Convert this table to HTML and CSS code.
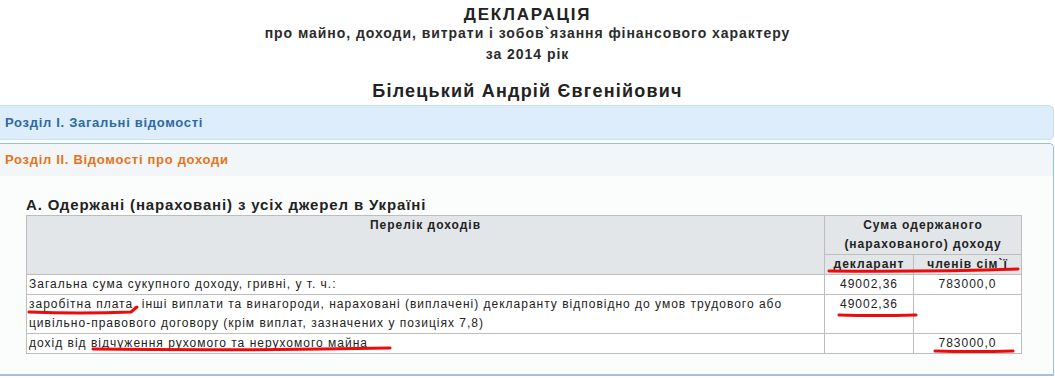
FILE: index.html
```html
<!DOCTYPE html>
<html lang="uk">
<head>
<meta charset="utf-8">
<title>Декларація</title>
<link rel="stylesheet" href="styles.css">
</head>
<body>
<div class="page">
  <header class="doc-head">
    <h1 class="doc-title">ДЕКЛАРАЦІЯ</h1>
    <p class="doc-sub">про майно, доходи, витрати і зобов`язання фінансового характеру<br>за 2014 рік</p>
    <h2 class="doc-name">Білецький Андрій Євгенійович</h2>
  </header>

  <div class="panels">
    <section class="panel panel-closed">
      <div class="panel-head">Розділ І. Загальні відомості</div>
    </section>
    <section class="panel panel-open">
      <div class="panel-head">Розділ ІІ. Відомості про доходи</div>
      <div class="panel-body">
        <h3 class="tbl-title">А. Одержані (нараховані) з усіх джерел в Україні</h3>
        <table class="income">
          <colgroup>
            <col class="c1"><col class="c2"><col class="c3">
          </colgroup>
          <thead>
            <tr>
              <th rowspan="2">Перелік доходів</th>
              <th colspan="2">Сума одержаного (нарахованого) доходу</th>
            </tr>
            <tr>
              <th class="sub">декларант</th>
              <th class="sub">членів сім`ї</th>
            </tr>
          </thead>
          <tbody>
            <tr>
              <td>Загальна сума сукупного доходу, гривні, у т. ч.:</td>
              <td class="num">49002,36</td>
              <td class="num">783000,0</td>
            </tr>
            <tr>
              <td>заробітна плата, інші виплати та винагороди, нараховані (виплачені) декларанту відповідно до умов трудового або цивільно-правового договору (крім виплат, зазначених у позиціях 7,8)</td>
              <td class="num">49002,36</td>
              <td class="num"></td>
            </tr>
            <tr>
              <td>дохід від відчуження рухомого та нерухомого майна</td>
              <td class="num"></td>
              <td class="num">783000,0</td>
            </tr>
          </tbody>
        </table>
      </div>
    </section>
  </div>

  <svg class="marks" width="1055" height="378" viewBox="0 0 1055 378" aria-hidden="true">
    <path d="M829 271 Q 930 272 1018 269"/>
    <path d="M839 315 Q 875 316 916 315"/>
    <path d="M935 351 Q 975 352 1013 351"/>
    <path d="M29 312 Q 80 314 131 312 L 137 307"/>
    <path d="M93 349 Q 240 351 390 348"/>
  </svg>
</div>
</body>
</html>
```

FILE: styles.css
```css
html, body {
  margin: 0;
  padding: 0;
  background: #ffffff;
}

body {
  font-family: "Liberation Sans", Arial, sans-serif;
  color: #2b2b2b;
  overflow: hidden;
}

.page {
  position: relative;
  width: 1055px;
  height: 378px;
  overflow: hidden;
}

.doc-head {
  text-align: center;
  padding-top: 7px;
}

.doc-title {
  margin: 0;
  font-size: 17px;
  line-height: 16px;
  font-weight: bold;
  letter-spacing: 1.8px;
  color: #222;
}

.doc-sub {
  margin: 0;
  font-size: 14px;
  line-height: 21px;
  font-weight: bold;
  letter-spacing: 0.95px;
  color: #2b2b2b;
}

.doc-name {
  margin: 15px 0 0;
  font-size: 18px;
  line-height: 22px;
  font-weight: bold;
  letter-spacing: 1.2px;
  color: #222;
}

.panels {
  margin: 3px 1px 0 -6px;
  display: flex;
  flex-direction: column;
  gap: 3px;
}

.panel {
  border-radius: 5px;
}

.panel-head {
  font-size: 13px;
  font-weight: bold;
  padding-left: 10px;
  letter-spacing: 0.7px;
}

.panel-closed {
  background: #ddedfb;
  border: 1px solid #c8dff4;
}

.panel-closed .panel-head {
  height: 33px;
  line-height: 33px;
  color: #2c6aa2;
}

.panel-open {
  border: 1px solid #92c1ea;
  border-bottom: 2px solid #a8bfdc;
  border-radius: 5px 5px 0 0;
  background: #fbfdfd;
}

.panel-open .panel-head {
  height: 32px;
  line-height: 32px;
  background: #f2f6f8;
  color: #e5741a;
  border-radius: 5px 5px 0 0;
}

.panel-body {
  padding: 20px 0 20px 31px;
}

.tbl-title {
  margin: 0 0 1px;
  font-size: 15px;
  line-height: 18px;
  font-weight: bold;
  color: #222;
  letter-spacing: 0.85px;
}

.income {
  border-collapse: collapse;
  table-layout: fixed;
  width: 995px;
  font-size: 12px;
  line-height: 19px;
  letter-spacing: 1px;
  color: #222;
}

.c1 { width: 798px; }
.c2 { width: 89px; }
.c3 { width: 108px; }

.income th,
.income td {
  border: 1px solid #bdbdbd;
  padding: 0 2px;
}

.income thead th {
  background: #e2e6e9;
  font-weight: bold;
  text-align: center;
  vertical-align: top;
  padding: 0 4px;
}

.income td {
  vertical-align: top;
  background: #ffffff;
  text-align: left;
}

.income td.num {
  text-align: center;
}

.marks {
  position: absolute;
  left: 0;
  top: 0;
  pointer-events: none;
}

.marks path {
  fill: none;
  stroke: #ee0a0a;
  stroke-width: 3;
  stroke-linecap: round;
  stroke-linejoin: round;
}
```
